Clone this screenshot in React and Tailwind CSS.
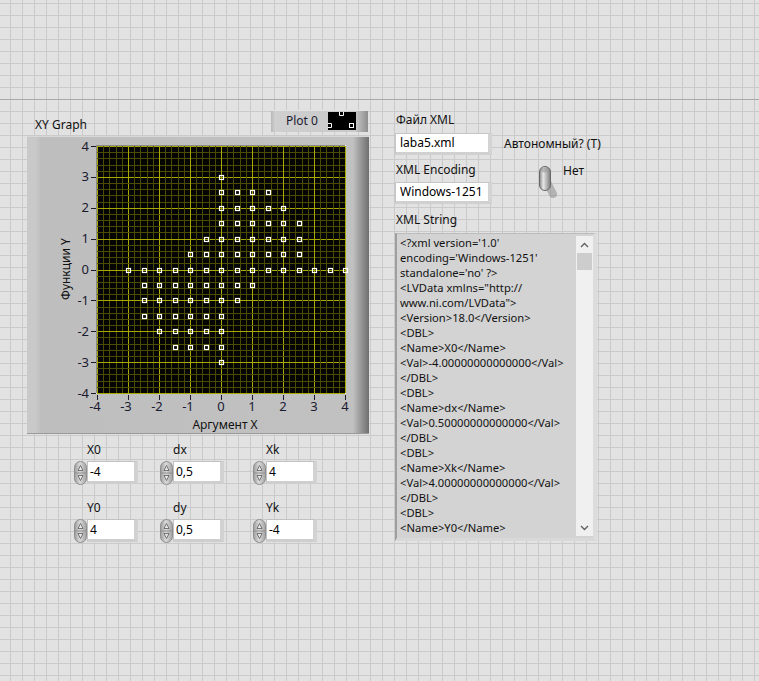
import React from 'react';

const FONT = "font-['Noto_Sans',sans-serif]";

// plot geometry inside the graph frame (frame-local pixels)
const PL = 70;
const PT = 10;
const PW = 248;
const PH = 247;
const sx = (v) => PL + ((v + 4) * PW) / 8;
const sy = (v) => PT + ((4 - v) * PH) / 8;

// [y, xFrom, xTo] in 0.5 steps
const ROWS = [
    [3, 0, 0],
    [2.5, 0, 1.5],
    [2, 0, 2],
    [1.5, 0, 2.5],
    [1, -0.5, 2.5],
    [0.5, -1, 2.5],
    [0, -3, 4],
    [-0.5, -2.5, 1],
    [-1, -2.5, 0.5],
    [-1.5, -2.5, 0],
    [-2, -2, 0],
    [-2.5, -1.5, 0],
    [-3, 0, 0],
];

const POINTS = ROWS.flatMap(([y, a, b]) => {
    const out = [];
    for (let x = a; x <= b + 0.001; x += 0.5) out.push([x, y]);
    return out;
});

const TICKS = [-4, -3, -2, -1, 0, 1, 2, 3, 4];

const XML_LINES = [
    "<?xml version='1.0'",
    "encoding='Windows-1251'",
    "standalone='no' ?>",
    '<LVData xmlns="http://',
    'www.ni.com/LVData">',
    '<Version>18.0</Version>',
    '<DBL>',
    '<Name>X0</Name>',
    '<Val>-4.00000000000000</Val>',
    '</DBL>',
    '<DBL>',
    '<Name>dx</Name>',
    '<Val>0.50000000000000</Val>',
    '</DBL>',
    '<DBL>',
    '<Name>Xk</Name>',
    '<Val>4.00000000000000</Val>',
    '</DBL>',
    '<DBL>',
    '<Name>Y0</Name>',
];

function GraphDrawing() {
    const grid = [];
    for (let i = 0; i <= 40; i++) {
        const major = i % 5 === 0;
        const x = Math.round(PL + (i * PW) / 40) + 0.5;
        const y = Math.round(PT + (i * PH) / 40) + 0.5;
        const c = major ? '#a8a800' : '#4c4c00';
        grid.push(<line key={'v' + i} x1={x} y1={PT} x2={x} y2={PT + PH} stroke={c} strokeWidth="1" />);
        grid.push(<line key={'h' + i} x1={PL} y1={y} x2={PL + PW} y2={y} stroke={c} strokeWidth="1" />);
    }

    return (
        <svg width="342" height="298" viewBox="0 0 342 298" className="block">
            {/* plot well */}
            <rect x={PL - 1} y={PT - 1} width={PW + 2} height={PH + 2} fill="#e6e6e6" />
            <rect x={PL - 1} y={PT - 1} width={PW + 1} height={PH + 1} fill="#8a8a8a" />
            <rect x={PL} y={PT} width={PW} height={PH} fill="#050505" />
            {grid}
            {POINTS.map(([x, y], i) => (
                <rect
                    key={i}
                    x={Math.round(sx(x)) - 1.5}
                    y={Math.round(sy(y)) - 1.5}
                    width="4"
                    height="4"
                    fill="none"
                    stroke="#ffffff"
                    strokeWidth="1.2"
                />
            ))}

            {/* y axis */}
            {TICKS.map((v) => (
                <g key={'yt' + v}>
                    <line x1={PL - 6} y1={Math.round(sy(v)) + 0.5} x2={PL - 1} y2={Math.round(sy(v)) + 0.5} stroke="#1a1a2a" />
                    <text x={PL - 8} y={sy(v) + 4.5} textAnchor="end" fontSize="13" fill="#1a1a30" fontFamily="Noto Sans, sans-serif">
                        {v}
                    </text>
                </g>
            ))}
            {/* x axis */}
            {TICKS.map((v) => (
                <g key={'xt' + v}>
                    <line x1={Math.round(sx(v)) + 0.5} y1={PT + PH + 2} x2={Math.round(sx(v)) + 0.5} y2={PT + PH + 7} stroke="#1a1a2a" />
                    <text x={sx(v) - (v < 0 ? 2 : 0)} y={PT + PH + 18} textAnchor="middle" fontSize="13" fill="#1a1a30" fontFamily="Noto Sans, sans-serif">
                        {v}
                    </text>
                </g>
            ))}

            <text x="198" y="293" textAnchor="middle" fontSize="12" fill="#111" fontFamily="Noto Sans, sans-serif">
                Аргумент X
            </text>
            <text
                x="38"
                y="133"
                textAnchor="middle"
                dominantBaseline="central"
                fontSize="12"
                fill="#111"
                fontFamily="Noto Sans, sans-serif"
                transform="rotate(-90 38 133)"
            >
                Функции Y
            </text>
        </svg>
    );
}

function Spinner() {
    return (
        <svg width="13" height="24" viewBox="0 0 13 24" className="block shrink-0">
            <defs>
                <linearGradient id="spin" x1="0" x2="1" y1="0" y2="0">
                    <stop offset="0" stopColor="#9c9c9c" />
                    <stop offset="0.45" stopColor="#dadada" />
                    <stop offset="1" stopColor="#a2a2a2" />
                </linearGradient>
            </defs>
            <rect x="0.5" y="0.5" width="12" height="23" rx="6" fill="url(#spin)" stroke="#8e8e8e" />
            <line x1="1" y1="12" x2="12" y2="12" stroke="#8e8e8e" />
            <path d="M4 9.5 L6.5 4.5 L9 9.5 Z" fill="#e8e8e8" stroke="#5a5a5a" strokeWidth="0.8" />
            <path d="M4 14.5 L6.5 19.5 L9 14.5 Z" fill="#e8e8e8" stroke="#5a5a5a" strokeWidth="0.8" />
        </svg>
    );
}

function NumControl({ label, value, left }) {
    return (
        <div className={left}>
            <div className="ml-[13px] h-[16px] text-[12px] leading-[16px] text-[#111]">{label}</div>
            <div className="mt-[3px] flex items-start">
                <Spinner />
                <div className="h-[23px] w-[51px] bg-white border border-[#c2c2c2] border-r-[4px] border-r-[#d2d2d2] border-b-[3px] border-b-[#cecece] pl-[2px] text-[12px] leading-[19px] text-black">
                    {value}
                </div>
            </div>
        </div>
    );
}

function TextControl({ value }) {
    return (
        <div className="h-[22px] w-[97px] bg-white border border-[#c6c6c6] border-r-[4px] border-r-[#d4d4d4] border-b-[3px] border-b-[#d0d0d0] pl-[4px] text-[12px] leading-[18px] text-black">
            {value}
        </div>
    );
}

function Toggle() {
    return (
        <svg width="22" height="36" viewBox="0 0 22 36" className="block">
            <defs>
                <linearGradient id="tg" x1="0" x2="1" y1="0" y2="0">
                    <stop offset="0" stopColor="#8a8a8a" />
                    <stop offset="0.35" stopColor="#e6e6e6" />
                    <stop offset="1" stopColor="#7c7c7c" />
                </linearGradient>
            </defs>
            <line x1="8" y1="16" x2="15" y2="30" stroke="#8d8d8d" strokeWidth="8" strokeLinecap="round" opacity="0.55" />
            <rect x="1.5" y="2.5" width="11" height="24" rx="5.5" fill="url(#tg)" stroke="#666" />
            <ellipse cx="7" cy="6" rx="4" ry="2.5" fill="#9a9a9a" opacity="0.6" />
        </svg>
    );
}

export default function App() {
    return (
        <div
            className={`${FONT} w-[759px] h-[681px] overflow-hidden bg-[#e2e2e2] bg-[image:linear-gradient(to_right,#cacaca_1px,transparent_1px),linear-gradient(to_bottom,#cacaca_1px,transparent_1px)] bg-[size:12px_12px] bg-[position:10px_3px] text-[#111]`}
        >
            {/* top strip with the panel separator line */}
            <div className="h-[100px] border-b border-[#a8a8a8]"></div>

            <div className="flex">
                {/* left column: graph + numeric inputs */}
                <div className="ml-[27px] w-[342px] shrink-0">
                    <div className="flex h-[36px]">
                        <div className="ml-[8px] mt-[17px] text-[12px] leading-[16px]">XY Graph</div>
                        <div className="ml-auto mr-[1px] mt-[10px] flex h-[22px] w-[97px] items-center bg-[linear-gradient(to_right,#b8b8b8_0px,#cfcfcf_4px,#c9c9c9_84px,#8e8e8e_97px)] shadow-[inset_0_1px_0_#e2e2e2]">
                            <span className="ml-[15px] text-[12px] leading-[16px] text-[#1a1a30]">Plot 0</span>
                            <svg width="28" height="18" viewBox="0 0 28 18" className="ml-[10px] block">
                                <rect x="0" y="0" width="28" height="18" fill="#000" />
                                <path d="M11.5 0 V3.5 H15.5 V0" fill="none" stroke="#fff" />
                                <path d="M0 11.5 H3.5 V15.5 H0" fill="none" stroke="#fff" />
                                <rect x="21.5" y="11.5" width="4" height="4" fill="none" stroke="#fff" />
                            </svg>
                        </div>
                    </div>

                    <div className="h-[298px] w-[342px] bg-[linear-gradient(to_right,#c9c9c9_0px,#c9c9c9_9px,#bebebe_14px,#c1c1c1_326px,#9c9c9c_333px,#6f6f6f_342px)] border-t border-t-[#d8d8d8] border-b border-b-[#9a9a9a]">
                        <div className="-mt-px">
                            <GraphDrawing />
                        </div>
                    </div>

                    <div className="mt-[8px] flex">
                        <NumControl label="X0" value="-4" left="ml-[47px]" />
                        <NumControl label="dx" value="0,5" left="ml-[22px]" />
                        <NumControl label="Xk" value="4" left="ml-[29px]" />
                    </div>
                    <div className="mt-[15px] flex">
                        <NumControl label="Y0" value="4" left="ml-[47px]" />
                        <NumControl label="dy" value="0,5" left="ml-[22px]" />
                        <NumControl label="Yk" value="-4" left="ml-[29px]" />
                    </div>
                </div>

                {/* right column: XML file + string */}
                <div className="ml-[26px] w-[215px] shrink-0">
                    <div className="mt-[12px] ml-px h-[16px] text-[12px] leading-[16px]">Файл XML</div>
                    <div className="mt-[5px] flex items-center">
                        <TextControl value="laba5.xml" />
                        <span className="ml-[12px] whitespace-nowrap text-[12px] leading-[16px]">Автономный? (T)</span>
                    </div>
                    <div className="mt-[7px] flex items-start">
                        <div>
                            <div className="ml-px h-[16px] text-[12px] leading-[16px]">XML Encoding</div>
                            <div className="mt-[4px]">
                                <TextControl value="Windows-1251" />
                            </div>
                        </div>
                        <div className="ml-[46px] mt-[2px]">
                            <Toggle />
                        </div>
                        <span className="ml-[3px] mt-[1px] text-[12px] leading-[16px]">Нет</span>
                    </div>
                    <div className="mt-[8px] ml-px h-[16px] text-[12px] leading-[16px]">XML String</div>

                    <div className="mt-[5px] flex h-[308px] w-[202px] bg-[#d3d3d3] border-l-[2px] border-l-[#9e9e9e] border-t border-t-[#bcbcbc] border-r-[4px] border-r-[#dcdcdc] border-b-[3px] border-b-[#d8d8d8]">
                        <div className="flex-1 overflow-hidden pl-[3px] pt-[1px] text-[11.2px] leading-[15px] text-[#111]">
                            {XML_LINES.map((l, i) => (
                                <div key={i} className="whitespace-pre">{l}</div>
                            ))}
                        </div>
                        <div className="my-[2px] flex w-[17px] flex-col bg-[#f0f0f0]">
                            <div className="flex h-[17px] items-center justify-center">
                                <svg width="9" height="6" viewBox="0 0 9 6"><path d="M1 5 L4.5 1.5 L8 5" fill="none" stroke="#606060" strokeWidth="1.4" /></svg>
                            </div>
                            <div className="mx-px h-[17px] bg-[#cdcdcd]"></div>
                            <div className="flex-1"></div>
                            <div className="flex h-[17px] items-center justify-center">
                                <svg width="9" height="6" viewBox="0 0 9 6"><path d="M1 1 L4.5 4.5 L8 1" fill="none" stroke="#606060" strokeWidth="1.4" /></svg>
                            </div>
                        </div>
                    </div>
                </div>
            </div>
        </div>
    );
}
